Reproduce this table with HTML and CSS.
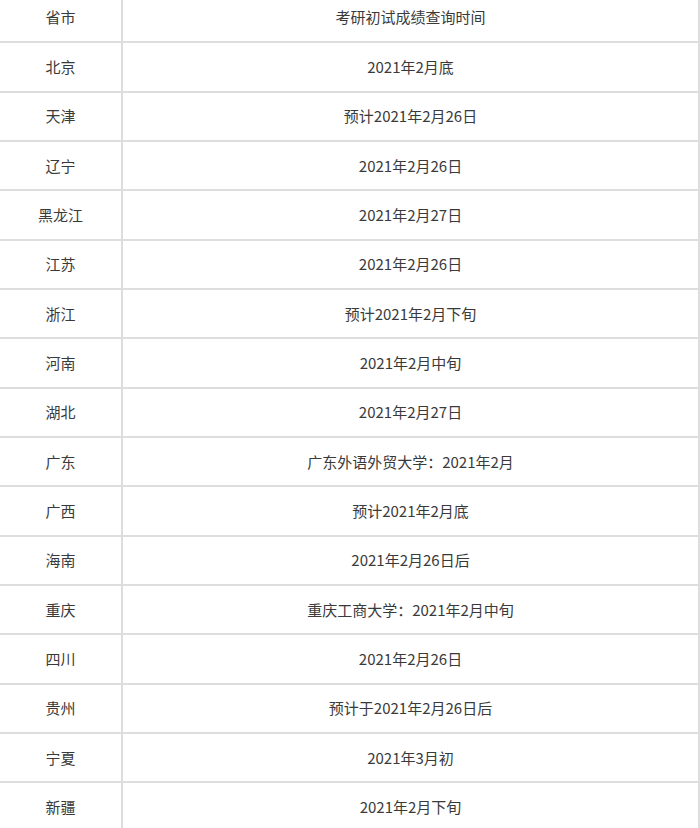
FILE: index.html
```html
<!DOCTYPE html>
<html lang="zh-CN">
<head>
<meta charset="utf-8">
<title>考研初试成绩查询时间</title>
<link rel="stylesheet" href="styles.css">
</head>
<body>
<div class="wrap">
<table class="score-table">
<tbody>
<tr><td class="prov">省市</td><td class="time">考研初试成绩查询时间</td></tr>
<tr><td class="prov">北京</td><td class="time">2021年2月底</td></tr>
<tr><td class="prov">天津</td><td class="time">预计2021年2月26日</td></tr>
<tr><td class="prov">辽宁</td><td class="time">2021年2月26日</td></tr>
<tr><td class="prov">黑龙江</td><td class="time">2021年2月27日</td></tr>
<tr><td class="prov">江苏</td><td class="time">2021年2月26日</td></tr>
<tr><td class="prov">浙江</td><td class="time">预计2021年2月下旬</td></tr>
<tr><td class="prov">河南</td><td class="time">2021年2月中旬</td></tr>
<tr><td class="prov">湖北</td><td class="time">2021年2月27日</td></tr>
<tr><td class="prov">广东</td><td class="time">广东外语外贸大学<span class="colon">：</span>2021年2月</td></tr>
<tr><td class="prov">广西</td><td class="time">预计2021年2月底</td></tr>
<tr><td class="prov">海南</td><td class="time">2021年2月26日后</td></tr>
<tr><td class="prov">重庆</td><td class="time">重庆工商大学<span class="colon">：</span>2021年2月中旬</td></tr>
<tr><td class="prov">四川</td><td class="time">2021年2月26日</td></tr>
<tr><td class="prov">贵州</td><td class="time">预计于2021年2月26日后</td></tr>
<tr><td class="prov">宁夏</td><td class="time">2021年3月初</td></tr>
<tr><td class="prov">新疆</td><td class="time">2021年2月下旬</td></tr>
</tbody>
</table>
</div>
</body>
</html>
```

FILE: styles.css
```css
html, body {
  margin: 0;
  padding: 0;
  background: #ffffff;
}
.wrap {
  width: 700px;
  height: 828px;
  overflow: hidden;
}
.score-table {
  border-collapse: collapse;
  table-layout: fixed;
  width: 702px;
  margin-top: -8.2px;
  margin-left: -2px;
  font-family: "Noto Sans CJK SC", "Microsoft YaHei", sans-serif;
  font-size: 15px;
  color: #3a3a3a;
}
.score-table td {
  border: 2px solid #dddddd;
  height: 47.35px;
  padding: 0;
  text-align: center;
  vertical-align: middle;
  line-height: 20px;
}
.score-table td.prov {
  width: 121px;
}
.colon {
  font-family: "Noto Sans CJK TC", "Noto Sans CJK SC", sans-serif;
}
```
